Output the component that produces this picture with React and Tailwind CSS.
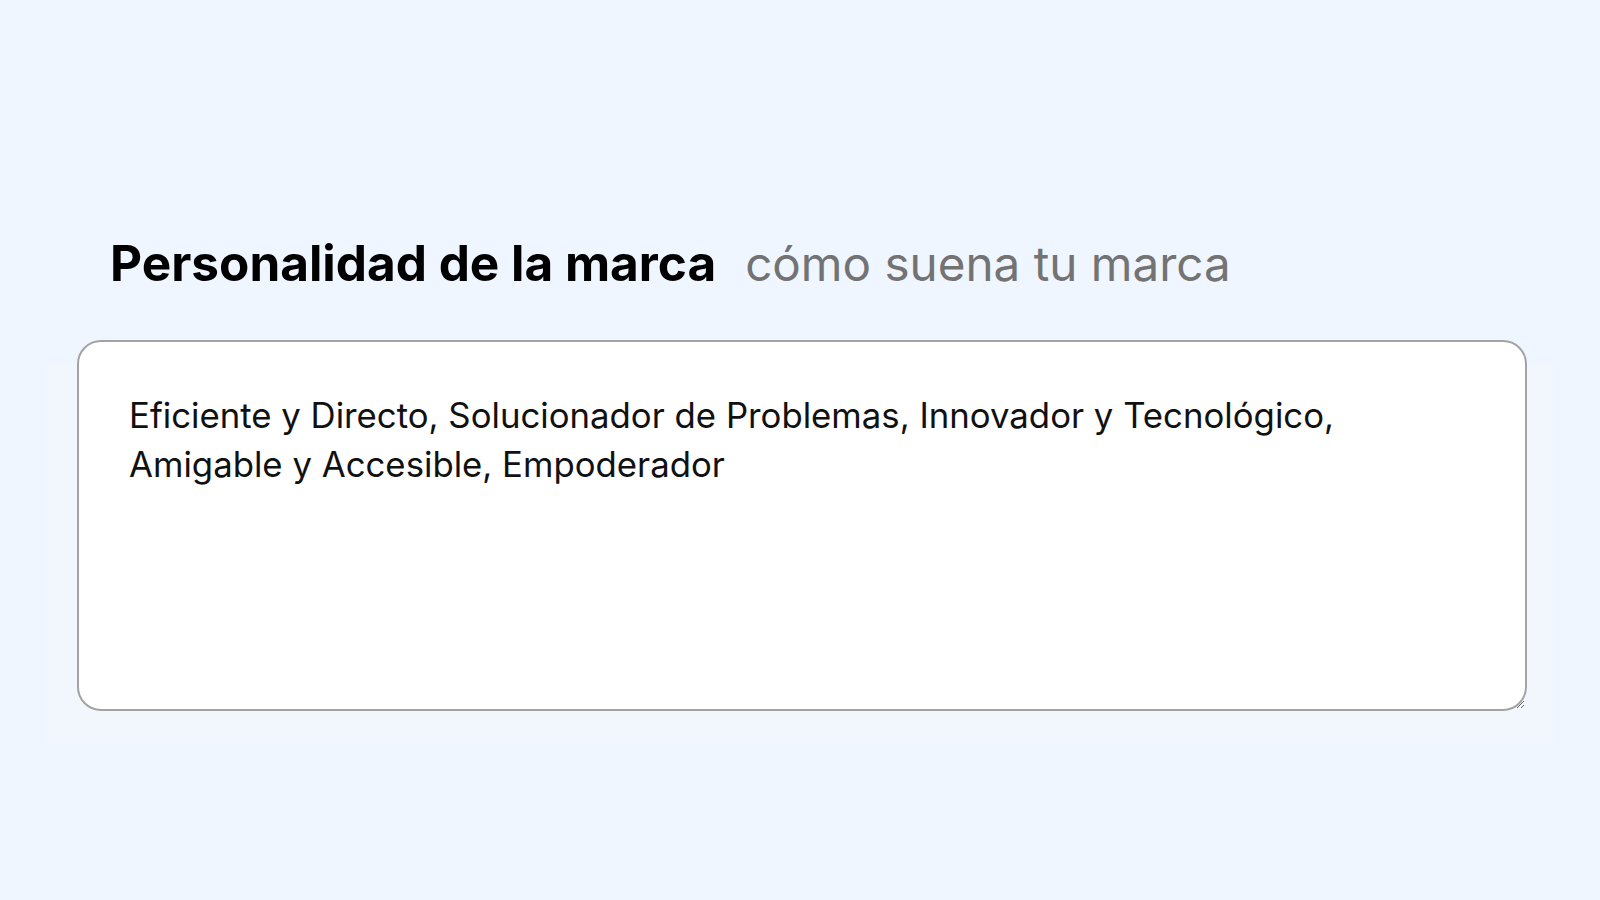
export default function App() {
  return (
    <div className="min-h-screen bg-[#eff6ff] font-['Inter',sans-serif] flex flex-col pt-[228px]">
      <div className="relative ml-[77px] w-[1450px]">
        {/* faint backing panel */}
        <div className="absolute left-[-30px] right-[-26px] top-[135px] bottom-[-33px] bg-[#f2f7fe]"></div>

        <div className="relative">
          <h2 className="flex items-baseline gap-[29px] px-[33px] mb-[41px] leading-[70px]">
            <span className="text-[49.5px] font-bold text-black">Personalidad de la marca</span>
            <span className="text-[47.6px] font-normal text-[#737373]">cómo suena tu marca</span>
          </h2>

          <textarea
            className="block w-full h-[371px] rounded-3xl border-2 border-[#a3a3a3] bg-white pl-[50px] pr-[48px] pt-[49px] pb-[40px] text-[34.75px] leading-[49px] text-[#111111] outline-none"
            defaultValue="Eficiente y Directo, Solucionador de Problemas, Innovador y Tecnológico, Amigable y Accesible, Empoderador"
          />
        </div>
      </div>
    </div>
  )
}
